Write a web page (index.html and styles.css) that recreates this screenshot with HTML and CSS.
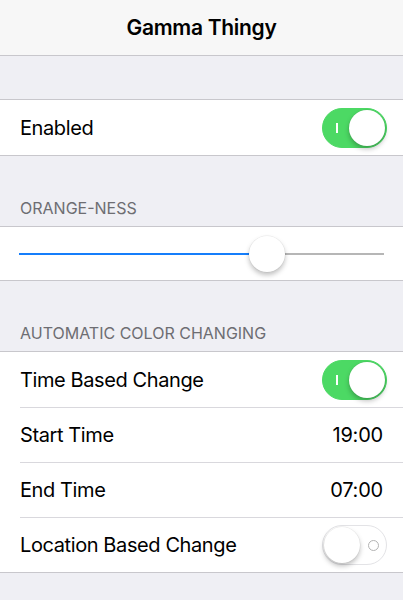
FILE: index.html
```html
<!DOCTYPE html>
<html lang="en">
<head>
    <meta charset="UTF-8">
    <meta name="viewport" content="width=device-width, initial-scale=1.0">
    <title>Gamma Thingy</title>
    <link rel="stylesheet" href="styles.css">
</head>

<body>
    <header class="nav-bar">
        <h1>Gamma Thingy</h1>
    </header>

    <div class="spacer"></div>

    <ul class="group">
        <li class="cell">
            <div class="cell-inner">
                <span class="label">Enabled</span>
                <span class="switch on"><span class="switch-mark"></span><span class="knob"></span></span>
            </div>
        </li>
    </ul>

    <div class="section-header">ORANGE-NESS</div>

    <ul class="group">
        <li class="cell slider-cell">
            <div class="slider">
                <div class="slider-fill" style="width: 68%"></div>
                <div class="slider-thumb" style="left: 68%"></div>
            </div>
        </li>
    </ul>

    <div class="section-header">AUTOMATIC COLOR CHANGING</div>

    <ul class="group">
        <li class="cell">
            <div class="cell-inner">
                <span class="label">Time Based Change</span>
                <span class="switch on"><span class="switch-mark"></span><span class="knob"></span></span>
            </div>
        </li>
        <li class="cell">
            <div class="cell-inner">
                <span class="label">Start Time</span>
                <span class="value">19:00</span>
            </div>
        </li>
        <li class="cell">
            <div class="cell-inner">
                <span class="label">End Time</span>
                <span class="value">07:00</span>
            </div>
        </li>
        <li class="cell">
            <div class="cell-inner">
                <span class="label">Location Based Change</span>
                <span class="switch"><span class="knob"></span><span class="switch-mark"></span></span>
            </div>
        </li>
    </ul>
</body>
</html>
```

FILE: styles.css
```css
body {
    font-family: Inter, "Noto Sans", sans-serif;
    background-color: #efeff4;
    margin: 0;
    padding: 0;
    color: #000;
}

.nav-bar {
    height: 55px;
    background-color: #f7f7f7;
    border-bottom: 1px solid #c8c7cc;
    display: flex;
    align-items: center;
    justify-content: center;
}

.nav-bar h1 {
    margin: 0;
    font-size: 21px;
    font-weight: 600;
    letter-spacing: -0.3px;
}

.spacer {
    height: 43px;
}

.group {
    list-style-type: none;
    margin: 0;
    padding: 0;
    background-color: #fff;
    border-top: 1px solid #c8c7cc;
    border-bottom: 1px solid #c8c7cc;
}

.cell {
    padding-left: 20px;
}

.cell-inner {
    box-sizing: border-box;
    height: 55px;
    padding-right: 16px;
    display: flex;
    align-items: center;
    justify-content: space-between;
}

.cell + .cell .cell-inner {
    border-top: 1px solid #d9d8dd;
}

.label {
    font-size: 20px;
    letter-spacing: -0.4px;
}

.value {
    font-size: 20px;
    letter-spacing: -0.2px;
    margin-right: 4px;
}

.section-header {
    padding: 42px 20px 8px;
    font-size: 16px;
    line-height: 20px;
    color: #6d6d72;
    letter-spacing: 0;
}

/* switch */
.switch {
    position: relative;
    box-sizing: border-box;
    width: 65px;
    height: 40px;
    border-radius: 20px;
    background-color: #fff;
    border: 1.5px solid #e3e3e6;
    display: flex;
    align-items: center;
    justify-content: space-between;
    padding: 0 1px;
}

.switch.on {
    background-color: #4cd964;
    border-color: #4cd964;
}

.knob {
    width: 36px;
    height: 36px;
    border-radius: 50%;
    background-color: #fff;
    box-shadow: 0 3px 5px rgba(0, 0, 0, 0.25), 0 0 0 0.5px rgba(0, 0, 0, 0.08);
}

.switch-mark {
    box-sizing: border-box;
    width: 11px;
    height: 11px;
    margin: 0 6px;
    border-radius: 50%;
    border: 1.5px solid #b3b3b3;
}

.switch.on .switch-mark {
    width: 1.5px;
    height: 10px;
    margin: 0 0 0 12px;
    border: none;
    border-radius: 0;
    background-color: #fff;
}

/* slider */
.slider-cell {
    height: 53px;
    padding: 0 19px;
    display: flex;
    align-items: center;
}

.slider {
    position: relative;
    flex: 1;
    height: 2px;
    background-color: #b6b6b6;
}

.slider-fill {
    height: 2px;
    background-color: #157efb;
}

.slider-thumb {
    position: absolute;
    top: -17px;
    width: 36px;
    height: 36px;
    margin-left: -18px;
    border-radius: 50%;
    background-color: #fff;
    box-shadow: 0 3px 5px rgba(0, 0, 0, 0.25), 0 0 0 0.5px rgba(0, 0, 0, 0.08);
}
```
